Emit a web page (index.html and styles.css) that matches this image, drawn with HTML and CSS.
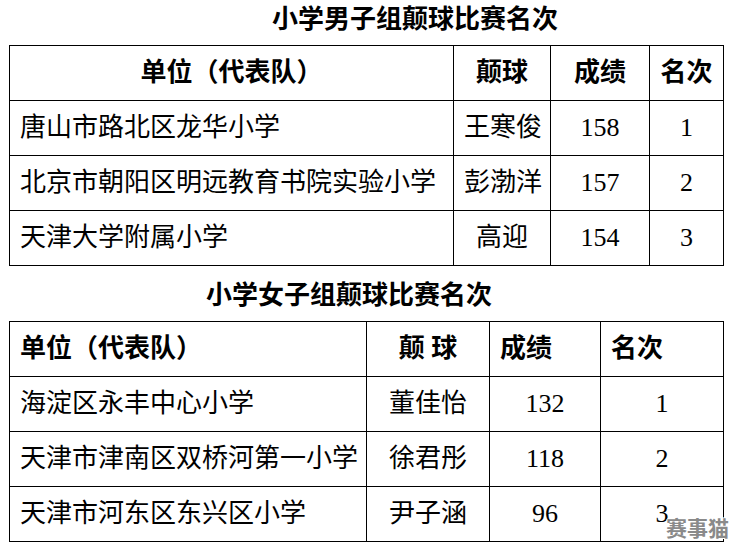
FILE: index.html
```html
<!DOCTYPE html>
<html lang="zh-CN">
<head>
<meta charset="utf-8">
<title>小学颠球比赛名次</title>
<link rel="stylesheet" href="styles.css">
</head>
<body>
<div class="page">
  <h2 class="title title-boys">小学男子组颠球比赛名次</h2>
  <table class="rank rank-boys">
    <colgroup><col class="c1"><col class="c2"><col class="c3"><col class="c4"></colgroup>
    <thead>
      <tr><th>单位（代表队）</th><th>颠球</th><th>成绩</th><th>名次</th></tr>
    </thead>
    <tbody>
      <tr><td class="unit">唐山市路北区龙华小学</td><td>王寒俊</td><td>158</td><td>1</td></tr>
      <tr><td class="unit">北京市朝阳区明远教育书院实验小学</td><td>彭渤洋</td><td>157</td><td>2</td></tr>
      <tr><td class="unit">天津大学附属小学</td><td>高迎</td><td>154</td><td>3</td></tr>
    </tbody>
  </table>

  <h2 class="title title-girls">小学女子组颠球比赛名次</h2>
  <table class="rank rank-girls">
    <colgroup><col class="c1"><col class="c2"><col class="c3"><col class="c4"></colgroup>
    <thead>
      <tr><th class="left">单位（代表队）</th><th>颠&nbsp;球</th><th class="left">成绩</th><th class="left">名次</th></tr>
    </thead>
    <tbody>
      <tr><td class="unit">海淀区永丰中心小学</td><td>董佳怡</td><td>132</td><td>1</td></tr>
      <tr><td class="unit">天津市津南区双桥河第一小学</td><td>徐君彤</td><td>118</td><td>2</td></tr>
      <tr><td class="unit">天津市河东区东兴区小学</td><td>尹子涵</td><td>96</td><td>3</td></tr>
    </tbody>
  </table>
  <div class="watermark">赛事猫</div>
</div>
</body>
</html>
```
FILE: styles.css
```css
html, body {
  margin: 0;
  padding: 0;
  background: #fff;
}
body {
  font-family: "Liberation Serif", "Noto Sans CJK SC", sans-serif;
  color: #000;
  width: 734px;
  height: 547px;
  overflow: hidden;
}
.page {
  position: relative;
  width: 734px;
  height: 547px;
  padding-left: 9px;
  box-sizing: border-box;
}
.title {
  margin: 0;
  font-size: 26px;
  font-weight: 700;
  line-height: 40px;
  white-space: nowrap;
}
.title-boys {
  height: 45px;
  padding-left: 263px;
  box-sizing: border-box;
}
.title-girls {
  height: 55px;
  padding-top: 10px;
  padding-left: 197px;
  box-sizing: border-box;
}
.rank {
  border-collapse: collapse;
  table-layout: fixed;
  width: 714px;
  font-size: 26px;
}
.rank th, .rank td {
  border: 1px solid #000;
  height: 55px;
  padding: 0 10px;
  box-sizing: border-box;
  text-align: center;
  vertical-align: middle;
  white-space: nowrap;
  line-height: 30px;
}
.rank th {
  font-weight: 700;
}
.rank td {
  font-weight: 400;
}
.rank .unit, .rank .left {
  text-align: left;
}
.rank-boys .c1 { width: 444px; }
.rank-boys .c2 { width: 97px; }
.rank-boys .c3 { width: 99px; }
.rank-boys .c4 { width: 74px; }
.rank-girls .c1 { width: 357px; }
.rank-girls .c2 { width: 123px; }
.rank-girls .c3 { width: 111px; }
.rank-girls .c4 { width: 123px; }
.watermark {
  position: absolute;
  left: 666px;
  top: 513px;
  font-family: "Noto Sans CJK SC", sans-serif;
  font-size: 21px;
  font-weight: 700;
  line-height: 28px;
  color: #8a8a8a;
  text-shadow: 1px 0 0 #fff, -1px 0 0 #fff, 0 1px 0 #fff, 0 -1px 0 #fff;
}
```
